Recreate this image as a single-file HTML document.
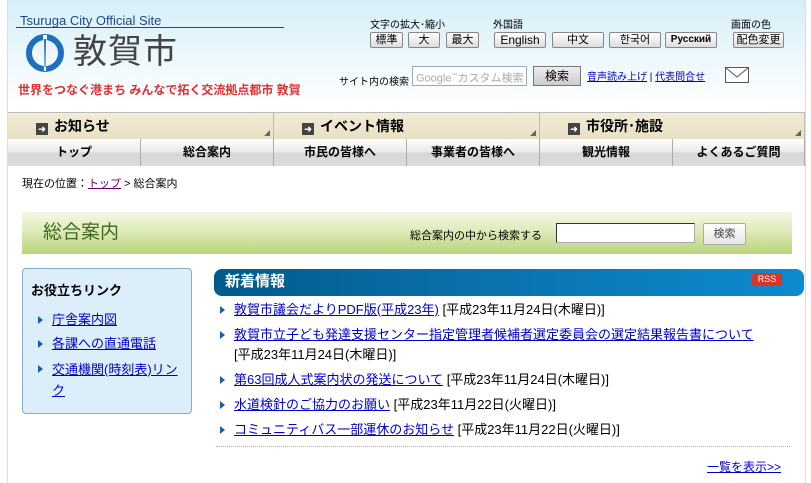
<!DOCTYPE html>
<html><head><meta charset="utf-8"><style>
*{margin:0;padding:0;box-sizing:border-box}
body{width:811px;height:483px;overflow:hidden;background:#fff;font-family:"Liberation Sans","Noto Sans CJK JP",sans-serif;font-size:12px;color:#000;position:relative}
.page{position:absolute;left:7px;top:0;width:799px;height:483px;border-left:1px solid #ddd;border-right:1px solid #ddd;background:linear-gradient(#d6eef9 0,#eef8fd 60px,#fff 105px,#fff 111px)}
.abs{position:absolute}
.btn{position:absolute;top:32px;height:16px;border:1px solid #888;background:linear-gradient(#fff,#ddd);font-size:11px;text-align:center;line-height:14px;border-radius:2px}
a{color:#00c;text-decoration:underline}
.nav1{position:absolute;top:112px;height:27px;background:linear-gradient(#f3ecd6,#e8e0c4);border-top:1px solid #bbb;border-right:1px solid #bbb;font-weight:bold;font-size:14px;line-height:26px}
.nav1:after{content:"";position:absolute;right:3px;bottom:3px;border-right:6px solid #666;border-top:6px solid transparent}
.nav1 i{display:inline-block;width:12px;height:12px;background:#444;margin-right:6px;vertical-align:-1px;color:#fff;font-style:normal;font-size:9px;line-height:12px;text-align:center}
.nav2{position:absolute;top:139px;height:27px;background:linear-gradient(#fff,#e8e8e8 50%,#d6d6d6 51%,#ddd);border-right:1px solid #aaa;font-weight:bold;font-size:12px;text-align:center;line-height:26px}
.news li{list-style:none;position:absolute;left:220px;font-size:13px;line-height:20px}
.news li:before{content:"";position:absolute;left:0;top:6px;border-left:5px solid #1a5fa8;border-top:4px solid transparent;border-bottom:4px solid transparent}
.news li span{padding-left:14px;display:block}
</style></head><body>
<div class="page"></div>
<div class="abs" style="left:20px;top:13px;font-size:13px;color:#1a4a8a;font-weight:normal">Tsuruga City Official Site</div>
<div class="abs" style="left:16px;top:27px;width:268px;border-top:1px solid #1a4a8a"></div>
<svg class="abs" style="left:25px;top:33px" width="40" height="40" viewBox="0 0 40 40"><circle cx="20" cy="20" r="16" fill="none" stroke="#1e6fc0" stroke-width="6"/><path d="M18 2 L22 2 L21 38 L19 38Z" fill="#fff"/><path d="M19 6 L21 6 L20.5 34 L19.5 34Z" fill="#1e6fc0"/></svg>
<div class="abs" style="left:73px;top:30px;font-size:34px;color:#444;letter-spacing:1px;line-height:44px">敦賀市</div>
<div class="abs" style="left:18px;top:81px;font-size:12px;color:#e03030;font-weight:bold">世界をつなぐ港まち みんなで拓く交流拠点都市 敦賀</div>
<div class="abs" style="left:370px;top:16px;font-size:10px">文字の拡大･縮小</div>
<div class="abs" style="left:493px;top:16px;font-size:10px">外国語</div>
<div class="abs" style="left:731px;top:16px;font-size:10px">画面の色</div>
<div class="btn" style="left:370px;width:33px">標準</div>
<div class="btn" style="left:408px;width:32px">大</div>
<div class="btn" style="left:446px;width:33px">最大</div>
<div class="btn" style="left:494px;width:52px;font-size:12px">English</div>
<div class="btn" style="left:552px;width:52px">中文</div>
<div class="btn" style="left:609px;width:52px">한국어</div>
<div class="btn" style="left:665px;width:52px;font-weight:bold;font-size:10px">Русский</div>
<div class="btn" style="left:733px;width:51px">配色変更</div>
<div class="abs" style="left:339px;top:73px;font-size:10px">サイト内の検索</div>
<div class="abs" style="left:412px;top:66px;width:115px;height:20px;border:1px solid #9ab;background:#fff;font-size:11px;color:#aaa;line-height:18px;padding-left:3px">Google<sup style="font-size:6px">™</sup>カスタム検索</div>
<div class="abs" style="left:533px;top:66px;width:48px;height:20px;border:1px solid #777;background:linear-gradient(#eee,#ccc);text-align:center;line-height:18px;font-size:12px">検索</div>
<div class="abs" style="left:587px;top:68px;font-size:10px"><a href="#">音声読み上げ</a> | <a href="#">代表問合せ</a></div>
<svg class="abs" style="left:725px;top:67px" width="24" height="16"><rect x="0.5" y="0.5" width="23" height="15" fill="#fff" stroke="#555"/><path d="M1 1 L12 10 L23 1" fill="none" stroke="#555"/></svg>
<div class="nav1" style="left:8px;width:266px;padding-left:28px"><i>➜</i>お知らせ</div>
<div class="nav1" style="left:274px;width:266px;padding-left:28px"><i>➜</i>イベント情報</div>
<div class="nav1" style="left:540px;width:265px;padding-left:28px"><i>➜</i>市役所･施設</div>
<div class="nav2" style="left:8px;width:133px">トップ</div>
<div class="nav2" style="left:141px;width:133px">総合案内</div>
<div class="nav2" style="left:274px;width:133px">市民の皆様へ</div>
<div class="nav2" style="left:407px;width:133px">事業者の皆様へ</div>
<div class="nav2" style="left:540px;width:133px">観光情報</div>
<div class="nav2" style="left:673px;width:132px">よくあるご質問</div>
<div class="abs" style="left:22px;top:175px;font-size:11px">現在の位置：<a href="#" style="color:#606">トップ</a> &gt; 総合案内</div>
<div class="abs" style="left:22px;top:212px;width:770px;height:42px;background:linear-gradient(#f4f9e6,#dbe9b4 50%,#b9d37a)"></div>
<div class="abs" style="left:43px;top:220px;font-size:19px;color:#3d6a1e;line-height:26px">総合案内</div>
<div class="abs" style="left:410px;top:227px;font-size:11px">総合案内の中から検索する</div>
<div class="abs" style="left:556px;top:223px;width:139px;height:20px;border:1px solid #333;border-right-color:#aaa;border-bottom-color:#aaa;background:#fff"></div>
<div class="abs" style="left:703px;top:223px;width:43px;height:22px;border:1px solid #aaa;background:linear-gradient(#fff,#e6e6e6);font-size:11px;text-align:center;line-height:20px;color:#444;border-radius:2px">検索</div>
<div class="abs" style="left:22px;top:268px;width:170px;height:146px;border:1px solid #88aacc;border-radius:4px;background:#ddeefb"></div>
<div class="abs" style="left:31px;top:280px;font-size:13px;font-weight:bold">お役立ちリンク</div>
<ul class="news">
<li style="left:38px;top:310px;width:150px"><span><a href="#">庁舎案内図</a></span></li>
<li style="left:38px;top:334px;width:150px"><span><a href="#">各課への直通電話</a></span></li>
<li style="left:38px;top:359px;width:145px;line-height:21px"><span><a href="#">交通機関(時刻表)リンク</a></span></li>
</ul>
<div class="abs" style="left:214px;top:269px;width:590px;height:27px;border-radius:8px;background:linear-gradient(90deg,#005a8c,#0a6fa8 40%,#0c8bd0)"></div>
<div class="abs" style="left:225px;top:272px;font-size:15px;font-weight:bold;color:#fff;line-height:20px">新着情報</div>
<div class="abs" style="left:752px;top:273px;width:30px;height:13px;background:#d32;color:#fff;font-size:9px;text-align:center;line-height:13px;border-radius:2px">RSS</div>
<ul class="news">
<li style="top:300px"><span><a href="#">敦賀市議会だよりPDF版(平成23年)</a> [平成23年11月24日(木曜日)]</span></li>
<li style="top:325px;width:580px"><span><a href="#">敦賀市立子ども発達支援センター指定管理者候補者選定委員会の選定結果報告書について</a><br>[平成23年11月24日(木曜日)]</span></li>
<li style="top:370px"><span><a href="#">第63回成人式案内状の発送について</a> [平成23年11月24日(木曜日)]</span></li>
<li style="top:395px"><span><a href="#">水道検針のご協力のお願い</a> [平成23年11月22日(火曜日)]</span></li>
<li style="top:420px"><span><a href="#">コミュニティバス一部運休のお知らせ</a> [平成23年11月22日(火曜日)]</span></li>
</ul>
<div class="abs" style="left:216px;top:446px;width:574px;border-top:1px dotted #aaa"></div>
<div class="abs" style="left:707px;top:458px;font-size:12px"><a href="#">一覧を表示&gt;&gt;</a></div>
</body></html>
